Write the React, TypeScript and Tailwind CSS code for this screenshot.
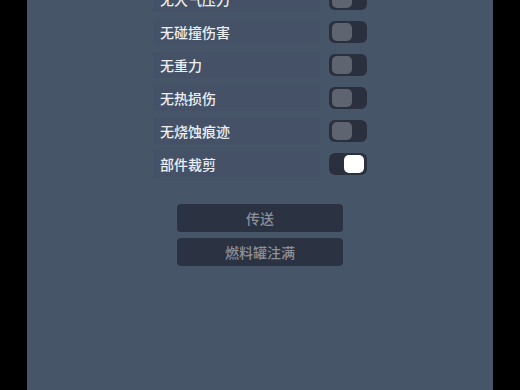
import { useState } from 'react'

interface Option {
    label: string;
    on: boolean;
}

const initialOptions: Option[] = [
    { label: '无大气压力', on: false },
    { label: '无碰撞伤害', on: false },
    { label: '无重力', on: false },
    { label: '无热损伤', on: false },
    { label: '无烧蚀痕迹', on: false },
    { label: '部件裁剪', on: true },
]

function Toggle({ on, onClick }: { on: boolean; onClick: () => void }) {
    return (
        <button
            onClick={onClick}
            className={`flex h-[22px] w-[38px] items-center rounded-[6px] bg-[#2a303d] px-[3px] ${on ? 'justify-end' : 'justify-start'}`}
        >
            <span className={`h-[18px] w-[20px] rounded-[5px] ${on ? 'bg-white' : 'bg-[#5e6470]'}`}></span>
        </button>
    )
}

export default function App() {
    const [options, setOptions] = useState<Option[]>(initialOptions)

    function flip(i: number) {
        setOptions(options.map((o, j) => (j === i ? { ...o, on: !o.on } : o)))
    }

    return (
        <div
            className="flex h-[390px] w-[520px] overflow-hidden bg-black"
            style={{ fontFamily: '"Noto Sans CJK SC", "Noto Sans", sans-serif' }}
        >
            <div className="ml-[27px] flex h-full w-[466px] flex-col items-center bg-[#475569]">
                <div className="mt-[-14px] flex flex-col gap-[7px]">
                    {options.map((opt, i) => (
                        <div key={opt.label} className="flex items-center gap-[9px]">
                            <div className="flex h-[26px] w-[167px] items-center rounded-[3px] bg-[#445166] pl-[7px] text-[14px] font-medium leading-none text-[#eceef1]">
                                {opt.label}
                            </div>
                            <Toggle on={opt.on} onClick={() => flip(i)} />
                        </div>
                    ))}
                </div>
                <div className="mt-[27px] flex flex-col gap-[6px]">
                    <button className="h-[28px] w-[166px] rounded-[4px] bg-[#2b3242] text-[14px] font-medium text-[#8b909a]">
                        传送
                    </button>
                    <button className="h-[28px] w-[166px] rounded-[4px] bg-[#2b3242] text-[14px] font-medium text-[#8b909a]">
                        燃料罐注满
                    </button>
                </div>
            </div>
        </div>
    )
}
